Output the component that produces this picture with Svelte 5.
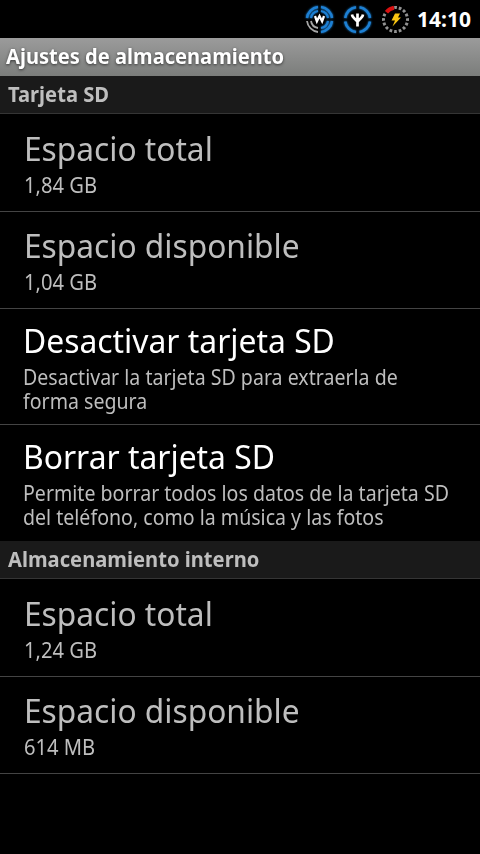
<script lang="ts">
  type Item = { title: string; summary: string[]; enabled?: boolean };
  type Section = { name: string; items: Item[] };

  const sections: Section[] = [
    {
      name: "Tarjeta SD",
      items: [
        { title: "Espacio total", summary: ["1,84 GB"] },
        { title: "Espacio disponible", summary: ["1,04 GB"] },
        {
          title: "Desactivar tarjeta SD",
          summary: ["Desactivar la tarjeta SD para extraerla de", "forma segura"],
          enabled: true,
        },
        {
          title: "Borrar tarjeta SD",
          summary: [
            "Permite borrar todos los datos de la tarjeta SD",
            "del teléfono, como la música y las fotos",
          ],
          enabled: true,
        },
      ],
    },
    {
      name: "Almacenamiento interno",
      items: [
        { title: "Espacio total", summary: ["1,24 GB"] },
        { title: "Espacio disponible", summary: ["614 MB"] },
      ],
    },
  ];
</script>

<div class="screen">
  <div class="status">
    <svg class="icon" viewBox="0 0 38 38">
      <defs>
        <filter id="glow" x="-20%" y="-20%" width="140%" height="140%">
          <feGaussianBlur stdDeviation="1.2" result="b" />
          <feMerge><feMergeNode in="b" /><feMergeNode in="SourceGraphic" /></feMerge>
        </filter>
      </defs>
      <g fill="none" stroke="#1f80d4" filter="url(#glow)">
        <path d="M18 7A12.500 12.500 0 0 0 7 18M21 7A12.500 12.500 0 0 1 32 18M32 21A12.500 12.500 0 0 1 21 32" stroke-width="2.600" />
        <path d="M18 11A8.500 8.500 0 0 0 11 18M21 11A8.500 8.500 0 0 1 28 18M28 21A8.500 8.500 0 0 1 21 28" stroke-width="2.200" />
      </g>
      <path d="M7 21A12.500 12.500 0 0 0 18 32M11 21A8.500 8.500 0 0 0 18 28" fill="none" stroke="#a6a6a6" stroke-width="1.800" />
      <circle cx="19.500" cy="19.500" r="6" fill="#000" />
      <path d="M15 16l1.900 5.300 2.600-5.300 2.600 5.300 1.900-5.300" fill="none" stroke="#fff" stroke-width="2.300" />
    </svg>
    <svg class="icon" viewBox="0 0 38 38">
      <path
        d="M18 7.200A12.500 12.500 0 0 0 7.200 18M21.500 7.200A12.500 12.500 0 0 1 32 18M32 21.500A12.500 12.500 0 0 1 21.500 32M18 32A12.500 12.500 0 0 1 7.200 21.500"
        fill="none"
        stroke="#1f80d4"
        stroke-width="2.600"
        filter="url(#glow)"
      />
      <path d="M19.500 13.500V26.500M14 14.500q.3 2.500 2 3.500l3.500 3.500 3.500-3.500q1.700-1 2-3.500" fill="none" stroke="#fff" stroke-width="2.700" />
    </svg>
    <svg class="icon" viewBox="0 0 38 38">
      <circle cx="19.500" cy="19.500" r="12" fill="none" stroke="#929292" stroke-width="3" pathLength="96" stroke-dasharray="3.500 2.500" stroke-dashoffset="1.700" />
      <path d="M9.500 13A12 12 0 0 1 18 7.500" fill="none" stroke="#000" stroke-width="4.500" />
      <path d="M10.500 12.200A12 12 0 0 1 18 7.700" fill="none" stroke="#d81010" stroke-width="4" />
      <path d="M19 13.500h5l-2 4h3l-8.500 9 2.500-6h-3.500z" fill="#f8c411" />
    </svg>
    <span class="clock">14:10</span>
  </div>

  <div class="titlebar"><span>Ajustes de almacenamiento</span></div>

  {#each sections as section}
    <div class="category"><span>{section.name}</span></div>
    <div class="items">
      {#each section.items as item}
        <div class="item" class:enabled={item.enabled}>
          <div class="title"><span>{item.title}</span></div>
          <div class="summary">
            {#each item.summary as line}
              <span>{line}</span>
            {/each}
          </div>
        </div>
      {/each}
    </div>
  {/each}
</div>

<style>
  :global(body) {
    background: #000;
  }
  .screen {
    width: 480px;
    height: 854px;
    overflow: hidden;
    background: #000;
    color: #bebebe;
    font-family: "Noto Sans", "Open Sans", sans-serif;
    white-space: nowrap;
  }
  /* condense the face a little, anchored at the left edge */
  span {
    display: inline-block;
    transform: scaleX(0.96);
    transform-origin: 0 50%;
  }
  .status {
    display: flex;
    align-items: center;
    height: 38px;
    padding-left: 300px;
  }
  .icon {
    width: 38px;
    height: 38px;
    flex: none;
  }
  .clock {
    margin-left: 3px;
    color: #fff;
    font-size: 21px;
    font-weight: 700;
    line-height: 38px;
    transform: none;
  }
  .titlebar {
    height: 38px;
    box-sizing: border-box;
    padding-left: 6px;
    background: linear-gradient(#9b9b9b, #7b7d7b);
    color: #fff;
    font-size: 21px;
    font-weight: 700;
    line-height: 37px;
    text-shadow: 0 1px 3px #333;
  }
  .titlebar span {
    transform: scaleX(0.957);
  }
  .category {
    height: 38px;
    box-sizing: border-box;
    padding-left: 8px;
    border-bottom: 1px solid #353535;
    background: #1a1a1a;
    font-size: 21px;
    font-weight: 700;
    line-height: 37px;
  }
  .item {
    height: 97px;
    box-sizing: border-box;
    padding: 14px 0 0 24px;
    border-bottom: 1px solid #444;
  }
  .item:first-child {
    height: 98px;
    padding-top: 15px;
  }
  .enabled {
    height: 116px;
    padding: 12px 0 0 23px;
  }
  .enabled:last-child {
    border-bottom: none;
  }
  .title {
    height: 44px;
    font-size: 33px;
    line-height: 39px;
  }
  .enabled .title {
    color: #fff;
  }
  .enabled .title span {
    transform: scaleX(0.965);
  }
  .summary {
    display: flex;
    flex-direction: column;
    align-items: flex-start;
    font-size: 21px;
    line-height: 24px;
  }
  .enabled .summary span {
    transform: scaleX(0.932);
  }
</style>
